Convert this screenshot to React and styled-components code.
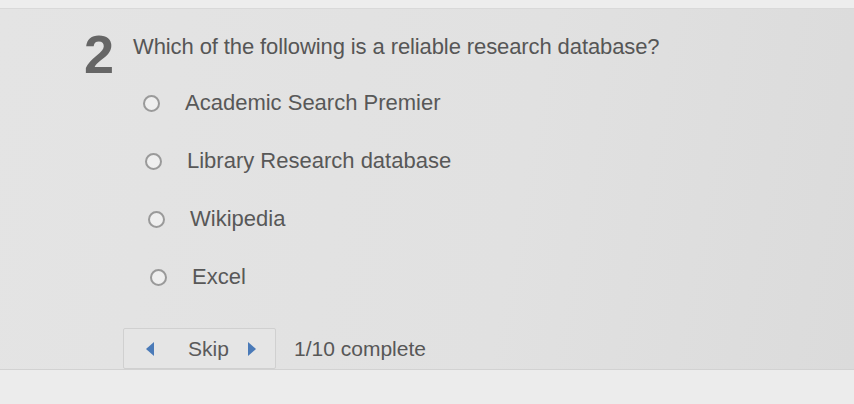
import React from "react";
import styled, { createGlobalStyle } from "styled-components";

const Global = createGlobalStyle`
  html, body { margin: 0; padding: 0; }
  body {
    width: 854px; height: 404px; overflow: hidden;
    background: #ebebeb;
    font-family: "Liberation Sans", Arial, sans-serif;
  }
`;

const Page = styled.div`
  display: flex;
  flex-direction: column;
  height: 404px;
`;

const TopStrip = styled.div`
  height: 8px;
  background: #ededed;
  border-bottom: 1px solid #d9d9d9;
`;

const Panel = styled.div`
  height: 361px;
  background: linear-gradient(100deg, #e4e4e4 0%, #e1e1e1 60%, #dbdbdb 100%);
  display: flex;
  padding: 18px 0 0 84px;
  box-sizing: border-box;
  border-bottom: 1px solid #d2d2d2;
`;

const Number = styled.div`
  font-size: 54px;
  font-weight: bold;
  color: #666;
  line-height: 1;
  width: 49px;
`;

const Body = styled.div`
  display: flex;
  flex-direction: column;
`;

const Question = styled.div`
  font-size: 22px;
  color: #565656;
  line-height: 24px;
  margin-top: 8px;
  letter-spacing: -0.1px;
`;

const Options = styled.div`
  display: flex;
  flex-direction: column;
  gap: 34px;
  margin-top: 32px;
  padding-left: 10px;
`;

const Option = styled.label`
  display: flex;
  align-items: center;
  gap: 25px;
  height: 24px;
  font-size: 22px;
  color: #585858;
  padding-left: ${p => p.$shift}px;
`;

const Radio = styled.span`
  width: 17px;
  height: 17px;
  border-radius: 50%;
  border: 2px solid #9a9a9a;
  background: #efefef;
  box-sizing: border-box;
  flex: none;
`;

const Footer = styled.div`
  display: flex;
  align-items: center;
  gap: 18px;
  margin-top: 39px;
  margin-left: -10px;
`;

const SkipButton = styled.div`
  width: 153px;
  height: 41px;
  box-sizing: border-box;
  border: 1px solid #d0d0d0;
  border-radius: 2px;
  background: #e5e5e5;
  display: flex;
  align-items: center;
  padding-left: 21px;
  font-size: 21px;
  color: #5a5a5a;
`;

const Arrow = styled.svg`
  width: 10px;
  height: 16px;
  flex: none;
`;

const SkipLabel = styled.span`
  margin: 0 18px 0 33px;
`;

const Progress = styled.span`
  font-size: 21px;
  color: #575757;
`;

const Bottom = styled.div`
  flex: 1;
  background: #ececec;
`;

const options = [
  { text: "Academic Search Premier", shift: 0 },
  { text: "Library Research database", shift: 2 },
  { text: "Wikipedia", shift: 5 },
  { text: "Excel", shift: 7 },
];

export default function App() {
  return (
    <>
      <Global />
      <Page>
        <TopStrip />
        <Panel>
          <Number>2</Number>
          <Body>
            <Question>Which of the following is a reliable research database?</Question>
            <Options>
              {options.map(o => (
                <Option key={o.text} $shift={o.shift}>
                  <Radio />
                  {o.text}
                </Option>
              ))}
            </Options>
            <Footer>
              <SkipButton>
                <Arrow viewBox="0 0 10 16"><path d="M9 1 L1 8 L9 15 Z" fill="#4a7ab8" /></Arrow>
                <SkipLabel>Skip</SkipLabel>
                <Arrow viewBox="0 0 10 16"><path d="M1 1 L9 8 L1 15 Z" fill="#4a7ab8" /></Arrow>
              </SkipButton>
              <Progress>1/10 complete</Progress>
            </Footer>
          </Body>
        </Panel>
        <Bottom />
      </Page>
    </>
  );
}
